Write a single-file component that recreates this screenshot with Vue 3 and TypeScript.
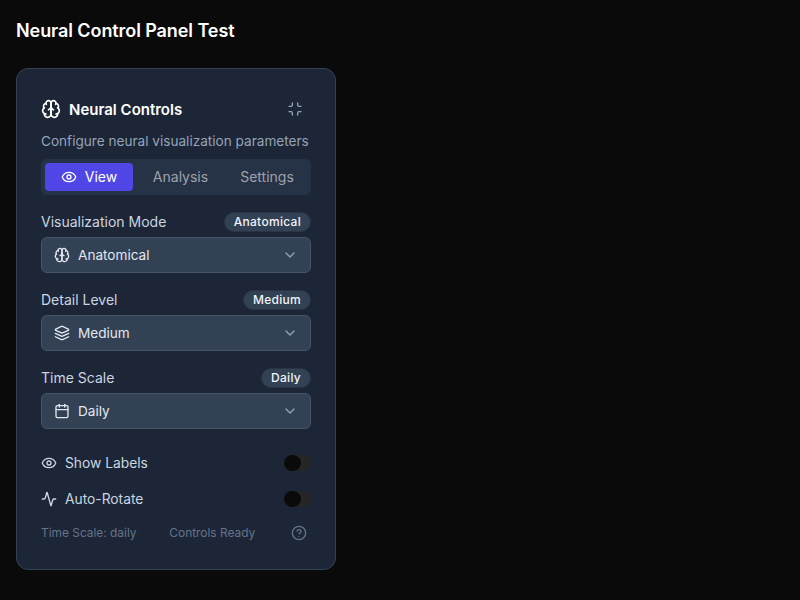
<template>
  <div class="page">
    <h1 class="page-title">Neural Control Panel Test</h1>
    <section class="panel">
      <header class="panel-head">
        <div class="panel-title">
          <svg class="icon title-icon" viewBox="0 0 24 24">
            <path v-for="d in icons.brain" :key="d" :d="d" />
          </svg>
          <h2>Neural Controls</h2>
        </div>
        <button class="collapse" title="Collapse">
          <svg class="icon small" viewBox="0 0 24 24">
            <path v-for="d in icons.minimize" :key="d" :d="d" />
          </svg>
        </button>
      </header>
      <p class="subtitle">Configure neural visualization parameters</p>

      <div class="tabs">
        <button
          v-for="tab in tabs"
          :key="tab"
          class="tab"
          :class="{ active: tab === activeTab }"
          @click="activeTab = tab"
        >
          <svg v-if="tab === 'View'" class="icon small" viewBox="0 0 24 24">
            <path :d="icons.eye[0]" />
            <circle cx="12" cy="12" r="3" />
          </svg>
          {{ tab }}
        </button>
      </div>

      <div class="fields">
        <div v-for="field in fields" :key="field.label" class="field">
          <div class="field-head">
            <label>{{ field.label }}</label>
            <span class="badge">{{ field.value }}</span>
          </div>
          <div class="select">
            <svg class="icon small" viewBox="0 0 24 24">
              <rect v-if="field.calendar" x="3" y="4" width="18" height="18" rx="2" />
              <path v-for="d in field.icon" :key="d" :d="d" />
            </svg>
            <span class="select-value">{{ field.value }}</span>
            <svg class="icon chevron" viewBox="0 0 24 24"><path d="m6 9 6 6 6-6" /></svg>
          </div>
        </div>
      </div>

      <div class="toggles">
        <div class="toggle-row">
          <svg class="icon small" viewBox="0 0 24 24">
            <path :d="icons.eye[0]" />
            <circle cx="12" cy="12" r="3" />
          </svg>
          <span class="toggle-label">Show Labels</span>
          <span class="switch"><i /></span>
        </div>
        <div class="toggle-row">
          <svg class="icon small" viewBox="0 0 24 24">
            <path :d="icons.activity[0]" />
          </svg>
          <span class="toggle-label">Auto-Rotate</span>
          <span class="switch"><i /></span>
        </div>
      </div>

      <footer class="panel-foot">
        <span>Time Scale: daily</span>
        <span class="foot-status">Controls Ready</span>
        <svg class="icon small help" viewBox="0 0 24 24">
          <circle cx="12" cy="12" r="10" />
          <path v-for="d in icons.help" :key="d" :d="d" />
        </svg>
      </footer>
    </section>
  </div>
</template>

<script setup lang="ts">
import {ref} from 'vue'

const icons = {
  brain: [
    'M12 5a3 3 0 1 0-5.997.125 4 4 0 0 0-2.526 5.77 4 4 0 0 0 .556 6.588A4 4 0 1 0 12 18Z',
    'M12 5a3 3 0 1 1 5.997.125 4 4 0 0 1 2.526 5.77 4 4 0 0 1-.556 6.588A4 4 0 1 1 12 18Z',
    'M15 13a4.5 4.5 0 0 1-3-4 4.5 4.5 0 0 1-3 4',
    'M17.599 6.5a3 3 0 0 0 .399-1.375',
    'M6.003 5.125A3 3 0 0 0 6.401 6.5',
    'M3.477 10.896a4 4 0 0 1 .585-.396',
    'M19.938 10.5a4 4 0 0 1 .585.396',
    'M6 18a4 4 0 0 1-1.967-.516',
    'M19.967 17.484A4 4 0 0 1 18 18',
  ],
  minimize: [
    'M8 3v3a2 2 0 0 1-2 2H3',
    'M21 8h-3a2 2 0 0 1-2-2V3',
    'M3 16h3a2 2 0 0 1 2 2v3',
    'M16 21v-3a2 2 0 0 1 2-2h3',
  ],
  eye: ['M2.062 12.348a1 1 0 0 1 0-.696 10.75 10.75 0 0 1 19.876 0 1 1 0 0 1 0 .696 10.75 10.75 0 0 1-19.876 0'],
  layers: [
    'm12.83 2.18a2 2 0 0 0-1.66 0L2.6 6.08a1 1 0 0 0 0 1.83l8.58 3.91a2 2 0 0 0 1.66 0l8.58-3.9a1 1 0 0 0 0-1.83Z',
    'm22 17.65-9.17 4.16a2 2 0 0 1-1.66 0L2 17.65',
    'm22 12.65-9.17 4.16a2 2 0 0 1-1.66 0L2 12.65',
  ],
  calendar: ['M8 2v4', 'M16 2v4', 'M3 10h18'],
  activity: ['M22 12h-2.48a2 2 0 0 0-1.93 1.46l-2.35 8.36a.25.25 0 0 1-.48 0L9.24 2.18a.25.25 0 0 0-.48 0l-2.35 8.36A2 2 0 0 1 4.49 12H2'],
  help: ['M9.09 9a3 3 0 0 1 5.83 1c0 2-3 3-3 3', 'M12 17h.01'],
}

const tabs = ['View', 'Analysis', 'Settings']
const activeTab = ref('View')

const fields = [
  {label: 'Visualization Mode', value: 'Anatomical', icon: icons.brain, calendar: false},
  {label: 'Detail Level', value: 'Medium', icon: icons.layers, calendar: false},
  {label: 'Time Scale', value: 'Daily', icon: icons.calendar, calendar: true},
]
</script>

<style>
html,
body {
  margin: 0;
  background: #0a0a0a;
}
</style>

<style scoped>
.page {
  box-sizing: border-box;
  height: 600px;
  padding: 16px;
  overflow: hidden;
  background: #0a0a0a;
  color: #fff;
  font-family: Inter, "Liberation Sans", sans-serif;
}

.page-title {
  margin: 0 0 22px;
  font-size: 18px;
  line-height: 30px;
  font-weight: 600;
  letter-spacing: -0.08px;
}

.panel {
  box-sizing: border-box;
  width: 320px;
  height: 502px;
  padding: 24px;
  border: 1px solid #334155;
  border-radius: 12px;
  background: #1c2636;
}

.icon {
  flex: none;
  fill: none;
  stroke: currentColor;
  stroke-width: 2;
  stroke-linecap: round;
  stroke-linejoin: round;
}

.small {
  width: 16px;
  height: 16px;
}

.panel-head {
  display: flex;
  align-items: center;
  justify-content: space-between;
  height: 32px;
}

.panel-title {
  display: flex;
  align-items: center;
  gap: 8px;
}

.title-icon {
  width: 20px;
  height: 20px;
}

.panel-title h2 {
  margin: 0;
  padding-top: 1px;
  font-size: 15px;
  line-height: 24px;
  font-weight: 600;
}

.collapse {
  display: flex;
  align-items: center;
  justify-content: center;
  width: 32px;
  height: 32px;
  padding: 0;
  border: 0;
  background: transparent;
  color: #94a3b8;
}

.subtitle {
  margin: 6px 0 8px;
  color: #94a3b8;
  font-size: 13.6px;
  line-height: 20px;
  white-space: nowrap;
}

.tabs {
  display: grid;
  grid-template-columns: 88px 1fr 1fr;
  align-items: center;
  height: 36px;
  box-sizing: border-box;
  padding: 4px;
  border-radius: 6px;
  background: #263245;
}

.tab {
  display: flex;
  align-items: center;
  justify-content: center;
  gap: 8px;
  height: 28px;
  padding: 0;
  border: 0;
  border-radius: 4px;
  background: transparent;
  color: #a1a1aa;
  font: 400 14px/20px Inter, "Liberation Sans", sans-serif;
}

.tab:nth-child(2) {
  padding-left: 8px;
}

.tab:nth-child(3) {
  padding-left: 7px;
}

.tab.active {
  background: #4f46e5;
  color: #fff;
}

.fields {
  display: flex;
  flex-direction: column;
  gap: 17px;
  margin-top: 17px;
}

.field-head {
  display: flex;
  align-items: center;
  justify-content: space-between;
  height: 20px;
  margin-bottom: 5px;
}

.field-head label {
  color: #cbd5e1;
  font-size: 14px;
  line-height: 20px;
}

.badge {
  box-sizing: border-box;
  height: 20px;
  padding: 0 9px;
  border: 1px solid #2a3446;
  border-radius: 10px;
  background: #334155;
  color: #f1f5f9;
  font-size: 12px;
  line-height: 18px;
  font-weight: 500;
  letter-spacing: 0.3px;
}

.select {
  display: flex;
  align-items: center;
  gap: 8px;
  box-sizing: border-box;
  height: 36px;
  padding: 0 12px;
  border: 1px solid #475569;
  border-radius: 6px;
  background: #334155;
  color: #e2e8f0;
  font-size: 13.6px;
}

.select-value {
  flex: 1;
}

.chevron {
  width: 16px;
  height: 16px;
  color: #94a3b8;
}

.toggles {
  display: flex;
  flex-direction: column;
  gap: 12px;
  margin-top: 22px;
}

.toggle-row {
  display: flex;
  align-items: center;
  gap: 8px;
  height: 24px;
  color: #cbd5e1;
}

.toggle-label {
  flex: 1;
  font-size: 13.8px;
  line-height: 22px;
}

.switch {
  display: block;
  width: 27px;
  height: 16px;
  border-radius: 8px;
  background: #262626;
}

.switch i {
  display: block;
  width: 17px;
  height: 16px;
  border-radius: 50%;
  background: #0a0a0a;
}

.panel-foot {
  display: flex;
  align-items: center;
  justify-content: space-between;
  margin-top: 14px;
  padding-right: 4px;
  color: #64748b;
  font-size: 11.9px;
  line-height: 16px;
}

.foot-status {
  margin-right: 3px;
}

.help {
  color: #64748b;
}
</style>
